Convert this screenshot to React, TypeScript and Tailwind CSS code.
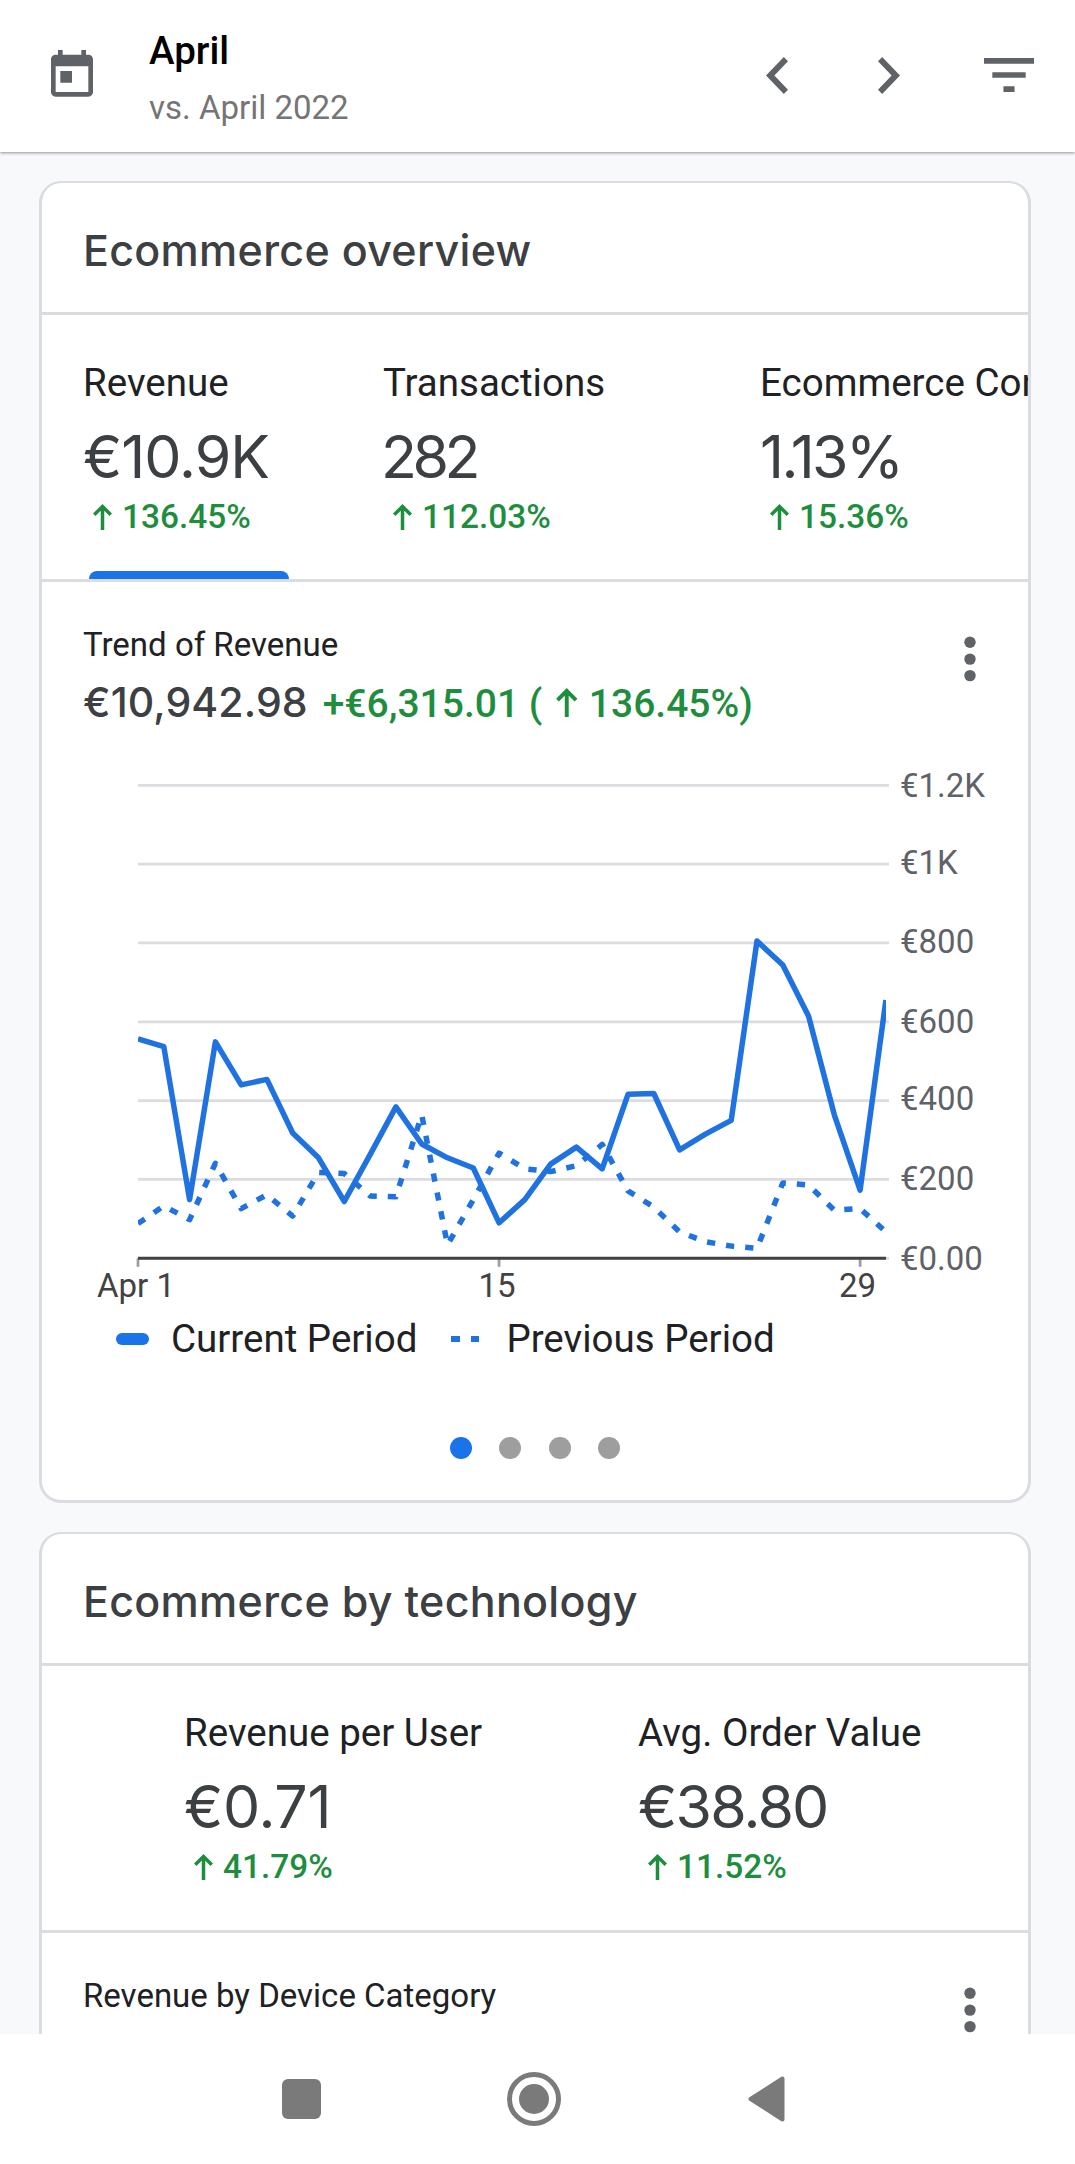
import type { ReactNode } from 'react';

interface Metric {
  label: string;
  value: string;
  delta: string;
  width: string;
  tracking: string;
}

const overviewMetrics: Metric[] = [
  { label: 'Revenue', value: '€10.9K', delta: '136.45%', width: 'w-[300px]', tracking: 'tracking-[-1px]' },
  { label: 'Transactions', value: '282', delta: '112.03%', width: 'w-[377px]', tracking: 'tracking-[-4.5px] -ml-[2px]' },
  { label: 'Ecommerce Conversion Rate', value: '1.13%', delta: '15.36%', width: 'w-[520px]', tracking: 'tracking-[-2.6px]' },
];

const technologyMetrics: Metric[] = [
  { label: 'Revenue per User', value: '€0.71', delta: '41.79%', width: 'w-[454px]', tracking: 'tracking-[-0.3px]' },
  { label: 'Avg. Order Value', value: '€38.80', delta: '11.52%', width: 'w-[340px]', tracking: 'tracking-[-1.8px]' },
];

const currentPeriod = [
  557, 537, 149, 549, 440, 454, 318, 255, 144, 263, 384, 290, 255, 229, 90,
  149, 239, 282, 227, 416, 418, 275, 315, 350, 805, 744, 615, 364, 173, 655,
];

const previousPeriod = [
  88, 133, 98, 241, 126, 161, 107, 218, 215, 158, 156, 364, 34, 149, 267,
  227, 220, 235, 289, 171, 130, 67, 42, 31, 25, 191, 186, 122, 126, 67,
];

const yLabels = [
  { text: '€1.2K', y: 57 },
  { text: '€1K', y: 134 },
  { text: '€800', y: 212.5 },
  { text: '€600', y: 293 },
  { text: '€400', y: 370 },
  { text: '€200', y: 450 },
  { text: '€0.00', y: 529.5 },
];

const xLabels = [
  { text: 'Apr 1', x: 55, day: 0 },
  { text: '15', x: 436.5, day: 14 },
  { text: '29', x: 797, day: 28 },
];

const PLOT_LEFT = 96;
const PLOT_RIGHT = 844;
const PLOT_BASE = 518.3;
const DAY_WIDTH = 25.79;
const GRID_STEP = 78.83;

const toPoints = (values: number[]) =>
  values
    .map((v, i) => `${(PLOT_LEFT + i * DAY_WIDTH).toFixed(1)},${(PLOT_BASE - (v * GRID_STEP) / 200).toFixed(1)}`)
    .join(' ');

function ArrowUp({ className }: { className: string }) {
  return (
    <svg viewBox="0 0 19 26" className={className} fill="none" stroke="currentColor" strokeWidth="3.5">
      <path d="M9.5 26V2.5M1.2 10.8L9.5 2.5l8.3 8.3" />
    </svg>
  );
}

function MoreMenu() {
  return (
    <svg viewBox="0 0 12 46" className="mt-[11px] h-[46px] w-3 shrink-0 fill-[#5f6368]">
      <circle cx="6" cy="6.2" r="5.7" />
      <circle cx="6" cy="23.1" r="5.7" />
      <circle cx="6" cy="39.6" r="5.7" />
    </svg>
  );
}

function MetricTab({ label, value, delta, width, tracking }: Metric) {
  return (
    <div className={`shrink-0 whitespace-nowrap ${width}`}>
      <p className="text-[38.5px] leading-[48px] text-[#202124]">{label}</p>
      <p className={`mt-[18px] font-['Inter',sans-serif] text-[59px] leading-[64px] text-[#3c4043] ${tracking}`}>
        {value}
      </p>
      <p className="mt-[8px] ml-[10px] flex items-center text-[33.4px] leading-[40px] font-medium text-[#1e8e3e]">
        <ArrowUp className="mr-[10px] h-[26px] w-[19px]" />
        {delta}
      </p>
    </div>
  );
}

function Card({ title, className, children }: { title: string; className: string; children: ReactNode }) {
  return (
    <section
      className={`w-[992px] shrink-0 overflow-hidden rounded-[22px] border-x-[3px] border-t-2 border-b-[3px] border-[#dadce0] bg-white ${className}`}
    >
      <h2 className="flex h-[132px] items-center border-b-[3px] border-[#dadce0] pt-[6px] pl-[41px] font-['Inter',sans-serif] text-[43px] font-medium tracking-[0.3px] text-[#3c4043]">
        {title}
      </h2>
      {children}
    </section>
  );
}

function TrendChart() {
  return (
    <svg viewBox="0 0 986 570" className="mt-[10px] block h-[570px] w-[986px]">
      <defs>
        <clipPath id="plot">
          <rect x={PLOT_LEFT} y="0" width={PLOT_RIGHT - PLOT_LEFT} height="570" />
        </clipPath>
      </defs>
      {yLabels.map((label, i) => (
        <g key={label.text}>
          <line
            x1={PLOT_LEFT}
            x2="847"
            y1={PLOT_BASE - (6 - i) * GRID_STEP}
            y2={PLOT_BASE - (6 - i) * GRID_STEP}
            stroke="#dadce0"
            strokeWidth="2.75"
          />
          <text x="858" y={label.y} fontSize="33" fill="#5f6368">{label.text}</text>
        </g>
      ))}
      {xLabels.map((label) => (
        <g key={label.text}>
          <line
            x1={PLOT_LEFT + label.day * DAY_WIDTH}
            x2={PLOT_LEFT + label.day * DAY_WIDTH}
            y1={PLOT_BASE}
            y2={PLOT_BASE + 8.5}
            stroke="#9e9e9e"
            strokeWidth="2.75"
          />
          <text x={label.x} y="557" fontSize="33" fill="#424242">{label.text}</text>
        </g>
      ))}
      <line x1={PLOT_LEFT} x2={PLOT_RIGHT} y1={PLOT_BASE} y2={PLOT_BASE} stroke="#424242" strokeWidth="2.9" />
      <g clipPath="url(#plot)" fill="none" stroke="#1f72e0" strokeWidth="5.5" strokeLinejoin="round">
        <polyline points={toPoints(previousPeriod)} strokeDasharray="8.25 11" />
        <polyline points={toPoints(currentPeriod)} />
      </g>
    </svg>
  );
}

function Header() {
  return (
    <header className="relative z-10 flex h-[152px] shrink-0 bg-white shadow-[0_1px_3px_rgba(0,0,0,0.42)]">
      <svg viewBox="0 0 24 24" className="mt-[43px] ml-[44px] size-14 fill-[#5f6368]">
        <path d="M19 3h-1V1h-2v2H8V1H6v2H5c-1.11 0-1.99.9-1.99 2L3 19c0 1.1.89 2 2 2h14c1.1 0 2-.9 2-2V5c0-1.1-.9-2-2-2zm0 16H5V8h14v11zM7 10h5v5H7z" transform="translate(0 2)" />
      </svg>
      <div className="mt-[26px] ml-[49px] w-[617px]">
        <h1 className="text-[38.5px] leading-[50px] font-medium text-black">April</h1>
        <p className="mt-3 text-[33px] leading-[40px] text-[#757575]">vs. April 2022</p>
      </div>
      <svg viewBox="8 6 7.41 12" preserveAspectRatio="none" className="mt-[56.5px] h-[37px] w-[22px] fill-[#5f6368]">
        <path d="M15.41 7.41L14 6l-6 6 6 6 1.41-1.41L10.83 12z" />
      </svg>
      <svg viewBox="8.59 6 7.41 12" preserveAspectRatio="none" className="mt-[56.5px] ml-[90px] h-[37px] w-[22px] fill-[#5f6368]">
        <path d="M10 6L8.59 7.41 13.17 12l-4.58 4.59L10 18l6-6z" />
      </svg>
      <svg viewBox="3 6 18 12" preserveAspectRatio="none" className="mt-[58px] ml-[84px] h-[34px] w-[50px] fill-[#5f6368]">
        <path d="M10 18h4v-2h-4v2zM3 6v2h18V6H3zm3 7h12v-2H6v2z" />
      </svg>
    </header>
  );
}

function NavBar() {
  return (
    <nav className="flex h-[130px] shrink-0 items-center bg-white pl-[282px] text-[#7a7a7a]">
      <span className="h-10 w-[39px] rounded-[6px] bg-current" />
      <span className="ml-[186px] flex size-[54px] items-center justify-center rounded-full border-[5px] border-current">
        <span className="size-[30px] rounded-full bg-current" />
      </span>
      <svg viewBox="0 0 37 46" className="ml-[187px] h-[46px] w-[37px] fill-current stroke-current">
        <path d="M2.5 23L34.5 2.5v41z" strokeWidth="4" strokeLinejoin="round" />
      </svg>
    </nav>
  );
}

export default function App() {
  return (
    <div className="flex h-[2164px] w-[1075px] flex-col overflow-hidden bg-[#f8f9fb] font-['Roboto',sans-serif]">
      <Header />

      <main className="flex h-[1882px] shrink-0 flex-col gap-[29px] overflow-hidden pt-[29px] pl-[39px]">
        <Card title="Ecommerce overview" className="h-[1322px]">
          <div className="flex h-[267px] flex-col border-b-[3px] border-[#dadce0] pt-[44px]">
            <div className="flex overflow-hidden pl-[41px]">
              {overviewMetrics.map((metric) => (
                <MetricTab key={metric.label} {...metric} />
              ))}
            </div>
            {/* active tab */}
            <div className="mt-auto ml-[46.5px] h-2 w-[200.5px] rounded-t-[8px] bg-[#1a73e8]" />
          </div>

          <div className="flex justify-between pt-[43px] pr-[52px] pl-[41px]">
            <div>
              <p className="text-[33px] leading-[40px] text-[#202124]">Trend of Revenue</p>
              <p className="mt-[11px] flex items-baseline text-[39px] leading-[52px] font-medium whitespace-nowrap text-[#1e8e3e]">
                <span className="font-['Inter',sans-serif] text-[41px] tracking-[0.1px] text-[#3c4043]">€10,942.98</span>
                <span className="ml-[15px]">+€6,315.01 (</span>
                <ArrowUp className="mr-[11px] ml-[14px] h-[29px] w-[21.5px]" />
                <span>136.45%)</span>
              </p>
            </div>
            <MoreMenu />
          </div>

          <TrendChart />

          <div className="mt-[5px] flex items-center pl-[74px] text-[38.5px] leading-[48px] text-[#202124]">
            <span className="h-3 w-[33px] rounded-full bg-[#1a73e8]" />
            <span className="ml-[22px]">Current Period</span>
            <span className="ml-[34px] flex gap-[11px]">
              <span className="h-[6px] w-[8.5px] bg-[#1f72e0]" />
              <span className="h-[6px] w-[8.5px] bg-[#1f72e0]" />
            </span>
            <span className="ml-[27px]">Previous Period</span>
          </div>

          <div className="mt-[74px] flex justify-center gap-[27.5px]">
            <span className="size-[22px] rounded-full bg-[#1a73e8]" />
            <span className="size-[22px] rounded-full bg-[#9e9e9e]" />
            <span className="size-[22px] rounded-full bg-[#9e9e9e]" />
            <span className="size-[22px] rounded-full bg-[#9e9e9e]" />
          </div>
        </Card>

        <Card title="Ecommerce by technology" className="h-[1322px]">
          <div className="flex h-[267px] border-b-[3px] border-[#dadce0] pt-[43px] pl-[142px]">
            {technologyMetrics.map((metric) => (
              <MetricTab key={metric.label} {...metric} />
            ))}
          </div>
          <div className="flex justify-between pt-[43px] pr-[52px] pl-[41px]">
            <p className="text-[33px] leading-[40px] text-[#202124]">Revenue by Device Category</p>
            <MoreMenu />
          </div>
        </Card>
      </main>

      <NavBar />
    </div>
  );
}
